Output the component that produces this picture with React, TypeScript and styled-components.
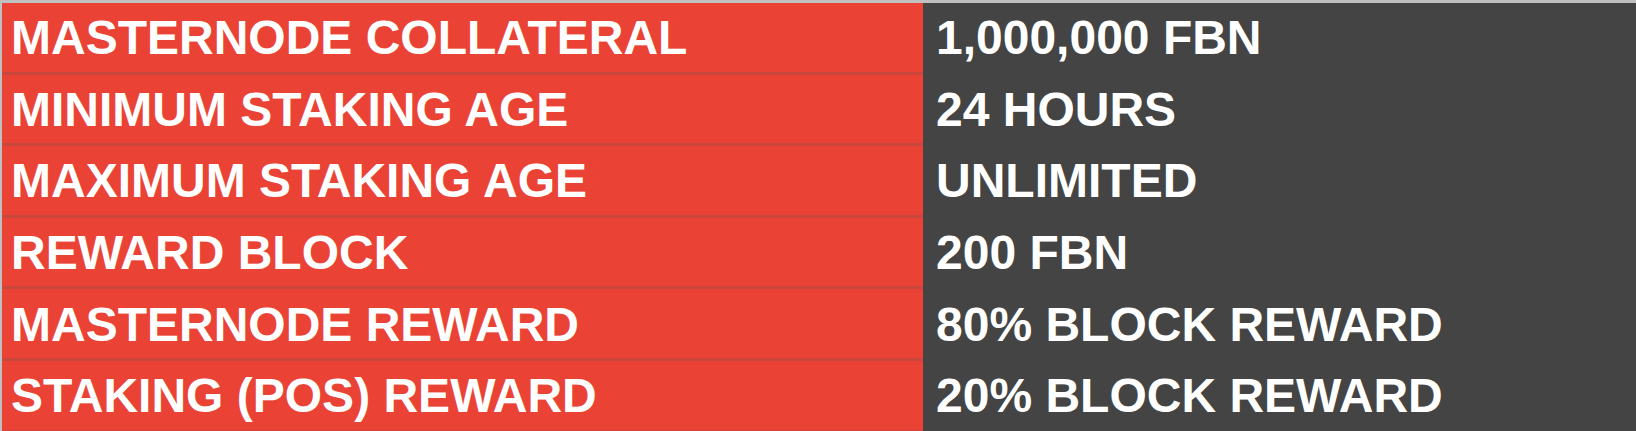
import { Fragment } from "react";
import styled, { createGlobalStyle } from "styled-components";

const GlobalStyle = createGlobalStyle`
  html, body {
    margin: 0;
    padding: 0;
    background: #c0c0c0;
  }
`;

const Wrapper = styled.div`
  padding: 3px 0 0 2px;
  height: 431px;
  overflow: hidden;
  box-sizing: border-box;
`;

const Table = styled.div`
  display: grid;
  grid-template-columns: 921px 1fr;
  font-family: "Liberation Sans", Arial, sans-serif;
  font-weight: 700;
  font-size: 48px;
  color: #ffffff;
`;

const Cell = styled.div<{ variant: "label" | "value" }>`
  display: flex;
  align-items: center;
  box-sizing: border-box;
  height: 71.6px;
  padding-top: 2px;
  padding-left: ${({ variant }) => (variant === "label" ? "9px" : "13px")};
  background: ${({ variant }) => (variant === "label" ? "#ea4335" : "#444444")};
  border-bottom: 3px solid
    ${({ variant }) => (variant === "label" ? "#c9463c" : "#444444")};
  white-space: nowrap;
  line-height: 1;
`;

const rows = [
  ["MASTERNODE COLLATERAL", "1,000,000 FBN"],
  ["MINIMUM STAKING AGE", "24 HOURS"],
  ["MAXIMUM STAKING AGE", "UNLIMITED"],
  ["REWARD BLOCK", "200 FBN"],
  ["MASTERNODE REWARD", "80% BLOCK REWARD"],
  ["STAKING (POS) REWARD", "20% BLOCK REWARD"],
];

export default function App() {
  return (
    <>
      <GlobalStyle />
      <Wrapper>
        <Table>
          {rows.map(([label, value]) => (
            <Fragment key={label}>
              <Cell variant="label">{label}</Cell>
              <Cell variant="value">{value}</Cell>
            </Fragment>
          ))}
        </Table>
      </Wrapper>
    </>
  );
}
